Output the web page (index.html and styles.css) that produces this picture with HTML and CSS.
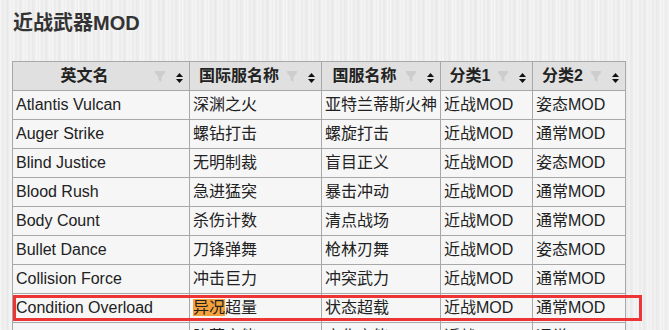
FILE: index.html
```html
<!DOCTYPE html>
<html lang="zh">
<head>
<meta charset="utf-8">
<title>近战武器MOD</title>
<link rel="stylesheet" href="styles.css">
</head>
<body>
<div class="page">
  <h2 class="title">近战武器MOD</h2>
  <div class="wrap">
    <table class="mods">
      <colgroup>
        <col class="c1"><col class="c2"><col class="c3"><col class="c4"><col class="c5">
      </colgroup>
      <thead>
        <tr>
          <th><div class="hd"><span class="ht">英文名</span><svg class="funnel" viewBox="0 0 10 11" width="10" height="11"><path d="M0 0H10V2L6.5 6V11L3.5 9V6L0 2Z"/></svg><svg class="sort" viewBox="0 0 7 10" width="7" height="10"><path d="M3.5 0L7 4H0Z M0 6H7L3.5 10Z"/></svg></div></th>
          <th><div class="hd"><span class="ht">国际服名称</span><svg class="funnel" viewBox="0 0 10 11" width="10" height="11"><path d="M0 0H10V2L6.5 6V11L3.5 9V6L0 2Z"/></svg><svg class="sort" viewBox="0 0 7 10" width="7" height="10"><path d="M3.5 0L7 4H0Z M0 6H7L3.5 10Z"/></svg></div></th>
          <th><div class="hd"><span class="ht">国服名称</span><svg class="funnel" viewBox="0 0 10 11" width="10" height="11"><path d="M0 0H10V2L6.5 6V11L3.5 9V6L0 2Z"/></svg><svg class="sort" viewBox="0 0 7 10" width="7" height="10"><path d="M3.5 0L7 4H0Z M0 6H7L3.5 10Z"/></svg></div></th>
          <th><div class="hd"><span class="ht">分类1</span><svg class="funnel" viewBox="0 0 10 11" width="10" height="11"><path d="M0 0H10V2L6.5 6V11L3.5 9V6L0 2Z"/></svg><svg class="sort" viewBox="0 0 7 10" width="7" height="10"><path d="M3.5 0L7 4H0Z M0 6H7L3.5 10Z"/></svg></div></th>
          <th><div class="hd"><span class="ht">分类2</span><svg class="funnel" viewBox="0 0 10 11" width="10" height="11"><path d="M0 0H10V2L6.5 6V11L3.5 9V6L0 2Z"/></svg><svg class="sort" viewBox="0 0 7 10" width="7" height="10"><path d="M3.5 0L7 4H0Z M0 6H7L3.5 10Z"/></svg></div></th>
        </tr>
      </thead>
      <tbody>
        <tr><td>Atlantis Vulcan</td><td>深渊之火</td><td>亚特兰蒂斯火神</td><td>近战MOD</td><td>姿态MOD</td></tr>
        <tr><td>Auger Strike</td><td>螺钻打击</td><td>螺旋打击</td><td>近战MOD</td><td>通常MOD</td></tr>
        <tr><td>Blind Justice</td><td>无明制裁</td><td>盲目正义</td><td>近战MOD</td><td>姿态MOD</td></tr>
        <tr><td>Blood Rush</td><td>急进猛突</td><td>暴击冲动</td><td>近战MOD</td><td>通常MOD</td></tr>
        <tr><td>Body Count</td><td>杀伤计数</td><td>清点战场</td><td>近战MOD</td><td>通常MOD</td></tr>
        <tr><td>Bullet Dance</td><td>刀锋弹舞</td><td>枪林刃舞</td><td>近战MOD</td><td>姿态MOD</td></tr>
        <tr><td>Collision Force</td><td>冲击巨力</td><td>冲突武力</td><td>近战MOD</td><td>通常MOD</td></tr>
        <tr><td>Condition Overload</td><td><span class="hl">异况</span>超量</td><td>状态超载</td><td>近战MOD</td><td>通常MOD</td></tr>
        <tr><td>Corrupt Charge</td><td>堕落充能</td><td>腐化充能</td><td>近战MOD</td><td>通常MOD</td></tr>
      </tbody>
    </table>
    <div class="mark"></div>
  </div>
</div>
</body>
</html>
```

FILE: styles.css
```css
html, body {
  margin: 0;
  padding: 0;
  height: 100%;
  overflow: hidden;
}
body {
  background-color: #efefef;
  background-image:
    repeating-linear-gradient(90deg,
      rgba(255,255,255,0.55) 0px, rgba(255,255,255,0) 2px,
      rgba(0,0,0,0.025) 3px, rgba(255,255,255,0.3) 5px,
      rgba(0,0,0,0.03) 7px, rgba(255,255,255,0) 9px,
      rgba(255,255,255,0.4) 11px, rgba(0,0,0,0.02) 13px);
  font-family: "Liberation Sans", "Noto Sans CJK SC", Arial, sans-serif;
  color: #222;
}
.page {
  padding: 11px 12px 0 12px;
}
.title {
  margin: 0 0 26px 1px;
  font-size: 20px;
  line-height: 24px;
  font-weight: bold;
  color: #333;
}
.wrap {
  position: relative;
}
.mods {
  border-collapse: collapse;
  table-layout: fixed;
  width: 614px;
  font-size: 16px;
}
.c1 { width: 177px; }
.c2 { width: 132px; }
.c3 { width: 119px; }
.c4 { width: 92px; }
.c5 { width: 93px; }
.mods th, .mods td {
  border: 1px solid #a8a8a8;
  padding: 4px 3px;
  line-height: 20px;
  text-align: left;
  white-space: nowrap;
  overflow: hidden;
}
.mods td {
  background: #f6f6f6;
  color: #222;
}
.mods th {
  background: #e0e0e0;
  font-weight: bold;
  color: #222;
  padding-right: 6px;
}
.hd {
  display: flex;
  align-items: center;
}
.ht {
  flex: 1;
  text-align: center;
  margin-right: 2px;
}
.funnel {
  fill: #cdcdcd;
  margin-right: 11px;
  margin-top: 1px;
}
.sort {
  fill: #111;
  margin-top: 3px;
}
.hl {
  background: #f6a23c;
}
.mark {
  position: absolute;
  left: 1px;
  top: 234px;
  width: 623px;
  height: 20px;
  border: 3px solid #ee3535;
}
```
